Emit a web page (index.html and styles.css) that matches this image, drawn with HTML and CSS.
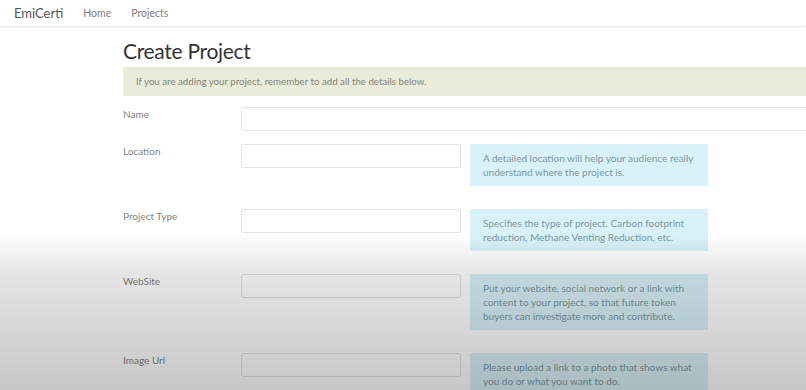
FILE: index.html
```html
<!DOCTYPE html>
<html lang="en">
<head>
    <meta charset="UTF-8">
    <meta name="viewport" content="width=device-width, initial-scale=1.0">
    <title>Create Project - EmiCerti</title>
    <link rel="stylesheet" href="styles.css">
</head>
<body>
    <nav class="navbar">
        <span class="brand">EmiCerti</span>
        <a class="nav-link" href="#">Home</a>
        <a class="nav-link" href="#">Projects</a>
    </nav>

    <div class="container">
        <h2>Create Project</h2>
        <div class="alert">If you are adding your project, remember to add all the details below.</div>

        <form id="projectForm">
            <div class="row row-name">
                <label for="name">Name</label>
                <input type="text" id="name" class="wide">
            </div>
            <div class="row">
                <label for="location">Location</label>
                <input type="text" id="location">
                <p class="help">A detailed location will help your audience really understand where the project is.</p>
            </div>
            <div class="row">
                <label for="type">Project Type</label>
                <input type="text" id="type">
                <p class="help">Specifies the type of project. Carbon footprint reduction, Methane Venting Reduction, etc.</p>
            </div>
            <div class="row">
                <label for="website">WebSite</label>
                <input type="text" id="website">
                <p class="help">Put your website, social network or a link with content to your project, so that future token buyers can investigate more and contribute.</p>
            </div>
            <div class="row">
                <label for="image">Image Url</label>
                <input type="text" id="image">
                <p class="help">Please upload a link to a photo that shows what you do or what you want to do.</p>
            </div>
        </form>
    </div>

    <div class="shade"></div>
</body>
</html>
```

FILE: styles.css
```css
html, body {
    margin: 0;
    overflow: hidden;
}
body {
    font-family: Lato, "Open Sans", sans-serif;
    background-color: #fff;
    color: #333;
    height: 390px;
}
.navbar {
    display: flex;
    align-items: center;
    height: 26px;
    padding-left: 14px;
    border-bottom: 1px solid #ececec;
    box-shadow: 0 1px 3px rgba(0, 0, 0, 0.05);
}
.brand {
    font-size: 13px;
    color: #555;
    margin-right: 20px;
}
.nav-link {
    font-size: 10.5px;
    color: #808080;
    text-decoration: none;
    margin-right: 20px;
}
.container {
    padding-left: 123px;
    width: 900px;
}
h2 {
    font-size: 21px;
    letter-spacing: -0.3px;
    font-weight: normal;
    margin: 10px 0 0;
    line-height: 28px;
    color: #333;
}
.alert {
    margin-top: 2px;
    height: 29px;
    line-height: 29px;
    padding-left: 13px;
    background-color: #e9ecd9;
    color: #868679;
    font-size: 9.7px;
}
form {
    margin-top: 11px;
}
.row {
    display: flex;
    align-items: flex-start;
    margin-bottom: 23px;
}
.row-name {
    margin-bottom: 13px;
}
label {
    width: 118px;
    flex-shrink: 0;
    font-size: 10px;
    color: #858585;
    padding-top: 1px;
}
input {
    box-sizing: border-box;
    width: 220px;
    height: 24px;
    border: 1px solid #e2e2e2;
    border-radius: 3px;
    background: #fff;
    flex-shrink: 0;
}
input.wide {
    width: 600px;
}
.help {
    margin: 0 0 0 9px;
    width: 238px;
    box-sizing: border-box;
    padding: 7px 13px;
    background-color: #d9f1f8;
    color: #7c9aa2;
    font-size: 10px;
    line-height: 14px;
}
/* darkening at the bottom of the capture */
.shade {
    position: fixed;
    left: 0;
    top: 0;
    right: 0;
    bottom: 0;
    pointer-events: none;
    background: linear-gradient(to bottom, rgba(0, 0, 0, 0) 60%, rgba(0, 0, 0, 0.1) 70%, rgba(0, 0, 0, 0.22) 100%);
}
```
